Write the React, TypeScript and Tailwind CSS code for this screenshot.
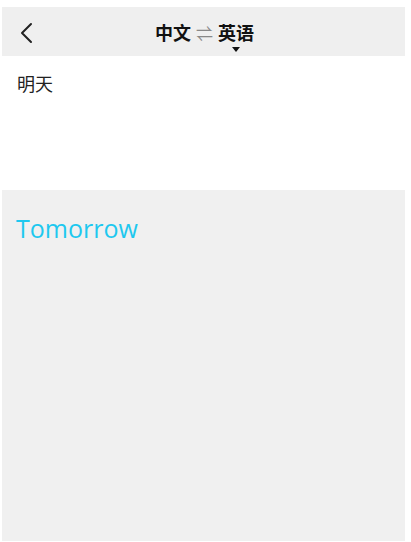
export default function App() {
  return (
    <div
      className="w-[411px] h-[542px] bg-white pt-[7px] pl-[2px] pr-[6px] flex flex-col"
      style={{ fontFamily: '"Noto Sans", "Noto Sans CJK SC", sans-serif' }}
    >
      <div className="h-[49px] bg-[#efefef] flex items-center relative shrink-0">
        <svg className="absolute left-[17px] top-[15px]" width="16" height="22" viewBox="0 0 16 22" fill="none">
          <path d="M12 2 L3 11 L12 20" stroke="#222" strokeWidth="2" strokeLinecap="round" strokeLinejoin="round" />
        </svg>
        <div className="flex-1 flex justify-center items-center gap-[5px] text-[18px] font-bold text-[#111] pt-[4px] pl-[2px]">
          <span>中文</span>
          <span className="text-[#888] font-normal text-[17px]">⇌</span>
          <span className="relative flex justify-center">
            英语
            <span className="absolute top-[27px] w-0 h-0 border-l-[4px] border-r-[4px] border-t-[5px] border-l-transparent border-r-transparent border-t-[#111]" />
          </span>
        </div>
      </div>
      <div className="h-[134px] bg-white px-[15px] pt-[15px] text-[18px] text-[#222] shrink-0">明天</div>
      <div className="flex-1 bg-[#f0f0f0] px-[14px] pt-[20px] mb-[1px]">
        <div className="text-[25px] text-[#1ec8ef]" style={{ fontFamily: '"Open Sans", "Noto Sans", sans-serif' }}>
          Tomorrow
        </div>
      </div>
    </div>
  );
}
